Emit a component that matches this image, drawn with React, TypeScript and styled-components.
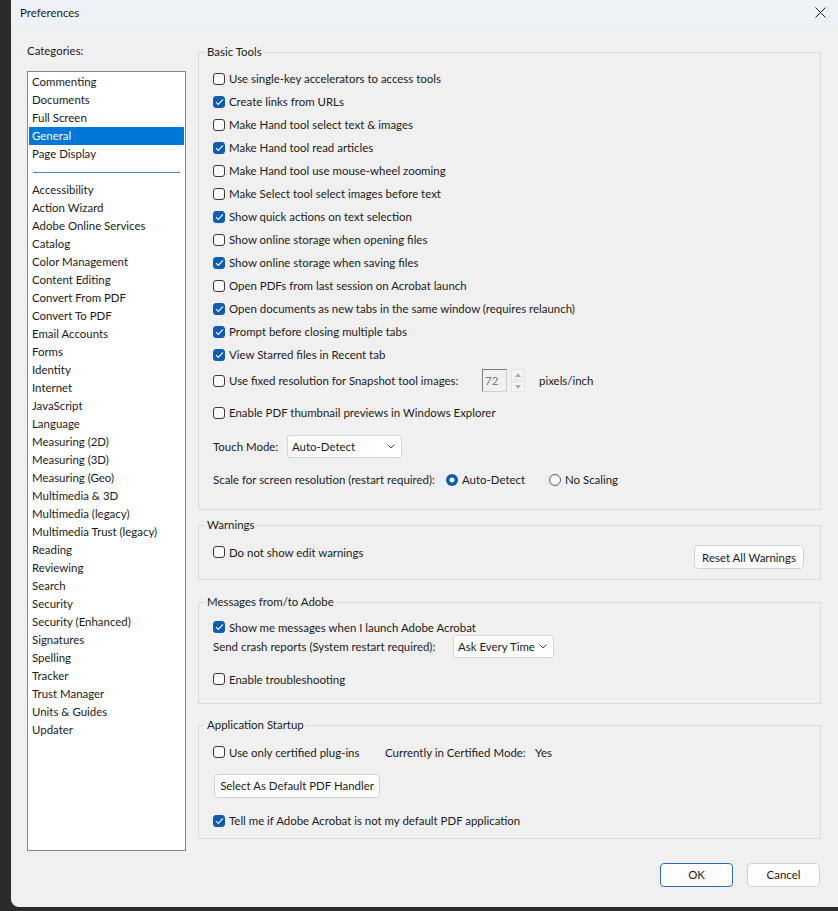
import React from "react";
import styled, { createGlobalStyle, css } from "styled-components";

const FONT = `Lato, "Noto Sans", "Liberation Sans", sans-serif`;
const FS = "11.45px";
const ACCENT = "#0b5cb5";

const GlobalStyle = createGlobalStyle`
  html, body { margin: 0; padding: 0; background: #2b2b2b; }
  body { font-family: ${FONT}; font-size: ${FS}; color: #1b1b1b; }
  * { box-sizing: border-box; }
`;

const Window = styled.div`
  margin-left: 11px;
  width: 827px;
  height: 907px;
  background: #f0f0f0;
  border-bottom-left-radius: 8px;
  display: flex;
  flex-direction: column;
  overflow: hidden;
`;

const TitleBar = styled.div`
  height: 27px;
  flex: none;
  background: #eef2f7;
  display: flex;
  align-items: center;
  justify-content: space-between;
  padding: 0 12px 2px 9px;
`;

const Title = styled.span`
  color: #1b1b1b;
`;

const CloseBtn = styled.span`
  display: flex;
  width: 11px;
  height: 11px;
`;

const Body = styled.div`
  display: flex;
  flex: 1;
  gap: 12px;
  padding: 0 17px 0 16px;
`;

const Sidebar = styled.div`
  width: 159px;
  flex: none;
  padding-top: 16px;
  display: flex;
  flex-direction: column;
`;

const SideLabel = styled.div`
  height: 16px;
  line-height: 16px;
`;

const List = styled.div`
  margin-top: 12px;
  height: 780px;
  background: #fff;
  border: 1px solid #828790;
  padding: 1px 1px 0 1px;
  display: flex;
  flex-direction: column;
`;

const ListItem = styled.div<{ $selected?: boolean }>`
  height: 18px;
  line-height: 18px;
  padding-left: 3px;
  white-space: nowrap;
  ${(p) =>
    p.$selected
      ? css`
          background: #0078d7;
          color: #fff;
        `
      : css`
          color: #1b1b1b;
        `}
`;

const ListSeparator = styled.div`
  height: 18px;
  display: flex;
  align-items: center;
  padding: 0 4px 0 4px;
  &::after {
    content: "";
    flex: 1;
    height: 1px;
    background: #4f87c2;
  }
`;

const Main = styled.div`
  flex: 1;
  padding-top: 25px;
  display: flex;
  flex-direction: column;
`;

const Group = styled.div<{ $mt?: number; $pt: number; $pb: number }>`
  position: relative;
  margin-top: ${(p) => p.$mt ?? 0}px;
  border: 1px solid #dadada;
  padding: ${(p) => p.$pt}px 14px ${(p) => p.$pb}px 14px;
  display: flex;
  flex-direction: column;
`;

const Legend = styled.span`
  position: absolute;
  top: -9px;
  left: 6px;
  padding: 0 2px;
  line-height: 16px;
  background: #f0f0f0;
`;

const Row = styled.div<{ $h?: number; $mt?: number }>`
  display: flex;
  align-items: center;
  height: ${(p) => p.$h ?? 23}px;
  margin-top: ${(p) => p.$mt ?? 0}px;
  white-space: nowrap;
`;

const SpreadRow = styled.div`
  display: flex;
  justify-content: space-between;
  align-items: flex-start;
`;

const CheckWrap = styled.label<{ $w?: number }>`
  display: flex;
  align-items: center;
  gap: 4px;
  ${(p) => (p.$w ? `width: ${p.$w}px;` : "")}
  flex: none;
`;

const Box = styled.span<{ $checked?: boolean }>`
  width: 12px;
  height: 12px;
  flex: none;
  border-radius: 3px;
  display: flex;
  align-items: center;
  justify-content: center;
  ${(p) =>
    p.$checked
      ? css`
          background: ${ACCENT};
          border: 1px solid ${ACCENT};
        `
      : css`
          background: #fbfbfb;
          border: 1px solid #3a3a3a;
        `}
`;

const Label = styled.span<{ $w?: number; $ml?: number }>`
  ${(p) => (p.$w ? `width: ${p.$w}px;` : "")}
  ${(p) => (p.$ml ? `margin-left: ${p.$ml}px;` : "")}
  flex: none;
`;

const RadioWrap = styled.label<{ $w?: number }>`
  display: flex;
  align-items: center;
  gap: 4px;
  ${(p) => (p.$w ? `width: ${p.$w}px;` : "")}
  flex: none;
`;

const RadioDot = styled.span<{ $on?: boolean }>`
  width: 12px;
  height: 12px;
  border-radius: 50%;
  flex: none;
  ${(p) =>
    p.$on
      ? css`
          background: radial-gradient(circle, #fff 0 2.2px, ${ACCENT} 2.8px);
        `
      : css`
          background: #fbfbfb;
          border: 1px solid #5a5a5a;
        `}
`;

const Select = styled.div<{ $w: number }>`
  width: ${(p) => p.$w}px;
  height: 23px;
  flex: none;
  background: #fff;
  border: 1px solid #d5d5d5;
  border-radius: 3px;
  display: flex;
  align-items: center;
  justify-content: space-between;
  padding: 0 6px 0 4px;
`;

const NumInput = styled.div`
  width: 25px;
  height: 23px;
  flex: none;
  border: 1px solid #cfcfcf;
  border-top-color: #7d7d7d;
  border-left-color: #7d7d7d;
  background: #f0f0f0;
  color: #7a7a7a;
  padding-left: 2px;
  display: flex;
  align-items: center;
`;

const SpinCol = styled.div`
  display: flex;
  flex-direction: column;
  gap: 1px;
  margin-left: 4px;
`;

const SpinBtn = styled.div`
  width: 14px;
  height: 11px;
  background: #f4f4f4;
  border: 1px solid #e4e4e4;
  display: flex;
  align-items: center;
  justify-content: center;
`;

const Button = styled.button<{ $w: number; $primary?: boolean; $mt?: number; $ml?: number; $mr?: number }>`
  width: ${(p) => p.$w}px;
  height: 24px;
  flex: none;
  margin-top: ${(p) => p.$mt ?? 0}px;
  margin-left: ${(p) => p.$ml ?? 0}px;
  margin-right: ${(p) => p.$mr ?? 0}px;
  font-family: ${FONT};
  font-size: ${FS};
  color: #1b1b1b;
  background: #fdfdfd;
  border: 1px solid ${(p) => (p.$primary ? "#2d6db5" : "#d2d2d2")};
  border-radius: 4px;
  padding: 0;
`;

const Footer = styled.div`
  display: flex;
  justify-content: flex-end;
  gap: 14px;
  margin-top: 24px;
  padding-right: 1px;
`;

const Check = () => (
  <svg width="9" height="8" viewBox="0 0 9 8">
    <path d="M1 4.2 L3.3 6.4 L8 1.4" fill="none" stroke="#fff" strokeWidth="1.1" />
  </svg>
);

const Chevron = () => (
  <svg width="8" height="5" viewBox="0 0 8 5">
    <path d="M0.5 0.5 L4 4 L7.5 0.5" fill="none" stroke="#555" strokeWidth="1" />
  </svg>
);

const Tri = ({ up }: { up?: boolean }) => (
  <svg width="6" height="4" viewBox="0 0 6 4">
    <path d={up ? "M0 4 L3 0 L6 4 Z" : "M0 0 L3 4 L6 0 Z"} fill="#a9a9a9" />
  </svg>
);

const CheckItem = ({ checked, label, w }: { checked?: boolean; label: string; w?: number }) => (
  <CheckWrap $w={w}>
    <Box $checked={checked}>{checked && <Check />}</Box>
    <span>{label}</span>
  </CheckWrap>
);

const topCats = ["Commenting", "Documents", "Full Screen", "General", "Page Display"];
const cats = [
  "Accessibility",
  "Action Wizard",
  "Adobe Online Services",
  "Catalog",
  "Color Management",
  "Content Editing",
  "Convert From PDF",
  "Convert To PDF",
  "Email Accounts",
  "Forms",
  "Identity",
  "Internet",
  "JavaScript",
  "Language",
  "Measuring (2D)",
  "Measuring (3D)",
  "Measuring (Geo)",
  "Multimedia & 3D",
  "Multimedia (legacy)",
  "Multimedia Trust (legacy)",
  "Reading",
  "Reviewing",
  "Search",
  "Security",
  "Security (Enhanced)",
  "Signatures",
  "Spelling",
  "Tracker",
  "Trust Manager",
  "Units & Guides",
  "Updater",
];

const basic: [string, boolean][] = [
  ["Use single-key accelerators to access tools", false],
  ["Create links from URLs", true],
  ["Make Hand tool select text & images", false],
  ["Make Hand tool read articles", true],
  ["Make Hand tool use mouse-wheel zooming", false],
  ["Make Select tool select images before text", false],
  ["Show quick actions on text selection", true],
  ["Show online storage when opening files", false],
  ["Show online storage when saving files", true],
  ["Open PDFs from last session on Acrobat launch", false],
  ["Open documents as new tabs in the same window (requires relaunch)", true],
  ["Prompt before closing multiple tabs", true],
  ["View Starred files in Recent tab", true],
];

export default function App() {
  return (
    <>
      <GlobalStyle />
      <Window>
        <TitleBar>
          <Title>Preferences</Title>
          <CloseBtn>
            <svg width="11" height="11" viewBox="0 0 11 11">
              <path d="M0.5 0.5 L10.5 10.5 M10.5 0.5 L0.5 10.5" stroke="#1b1b1b" strokeWidth="1" />
            </svg>
          </CloseBtn>
        </TitleBar>
        <Body>
          <Sidebar>
            <SideLabel>Categories:</SideLabel>
            <List>
              {topCats.map((c) => (
                <ListItem key={c} $selected={c === "General"}>
                  {c}
                </ListItem>
              ))}
              <ListSeparator />
              {cats.map((c) => (
                <ListItem key={c}>{c}</ListItem>
              ))}
            </List>
          </Sidebar>
          <Main>
            <Group $pt={14} $pb={18}>
              <Legend>Basic Tools</Legend>
              {basic.map(([l, c]) => (
                <Row key={l}>
                  <CheckItem label={l} checked={c} />
                </Row>
              ))}
              <Row $h={24} $mt={2.5}>
                <CheckItem label="Use fixed resolution for Snapshot tool images:" w={269} />
                <NumInput>72</NumInput>
                <SpinCol>
                  <SpinBtn>
                    <Tri up />
                  </SpinBtn>
                  <SpinBtn>
                    <Tri />
                  </SpinBtn>
                </SpinCol>
                <Label $ml={14}>pixels/inch</Label>
              </Row>
              <Row $mt={8.5}>
                <CheckItem label="Enable PDF thumbnail previews in Windows Explorer" />
              </Row>
              <Row $mt={11}>
                <Label $w={74}>Touch Mode:</Label>
                <Select $w={115}>
                  <span>Auto-Detect</span>
                  <Chevron />
                </Select>
              </Row>
              <Row $mt={10}>
                <Label $w={233}>Scale for screen resolution (restart required):</Label>
                <RadioWrap $w={103}>
                  <RadioDot $on />
                  <span>Auto-Detect</span>
                </RadioWrap>
                <RadioWrap>
                  <RadioDot />
                  <span>No Scaling</span>
                </RadioWrap>
              </Row>
            </Group>

            <Group $mt={15} $pt={14.5} $pb={10}>
              <Legend>Warnings</Legend>
              <SpreadRow>
                <Row>
                  <CheckItem label="Do not show edit warnings" />
                </Row>
                <Button $w={110} $mt={4.5} $mr={2}>
                  Reset All Warnings
                </Button>
              </SpreadRow>
            </Group>

            <Group $mt={22} $pt={16.5} $pb={12}>
              <Legend>Messages from/to Adobe</Legend>
              <Row $h={15}>
                <CheckItem label="Show me messages when I launch Adobe Acrobat" checked />
              </Row>
              <Row>
                <Label $w={240}>Send crash reports (System restart required):</Label>
                <Select $w={101}>
                  <span>Ask Every Time</span>
                  <Chevron />
                </Select>
              </Row>
              <Row $mt={10}>
                <CheckItem label="Enable troubleshooting" />
              </Row>
            </Group>

            <Group $mt={21} $pt={15} $pb={5.5}>
              <Legend>Application Startup</Legend>
              <Row>
                <CheckItem label="Use only certified plug-ins" w={172} />
                <Label $w={150}>Currently in Certified Mode:</Label>
                <Label>Yes</Label>
              </Row>
              <Row $h={24} $mt={10}>
                <Button $w={166} $ml={1}>
                  Select As Default PDF Handler
                </Button>
              </Row>
              <Row $mt={11.5}>
                <CheckItem label="Tell me if Adobe Acrobat is not my default PDF application" checked />
              </Row>
            </Group>

            <Footer>
              <Button $w={73} $primary>
                OK
              </Button>
              <Button $w={73}>Cancel</Button>
            </Footer>
          </Main>
        </Body>
      </Window>
    </>
  );
}
